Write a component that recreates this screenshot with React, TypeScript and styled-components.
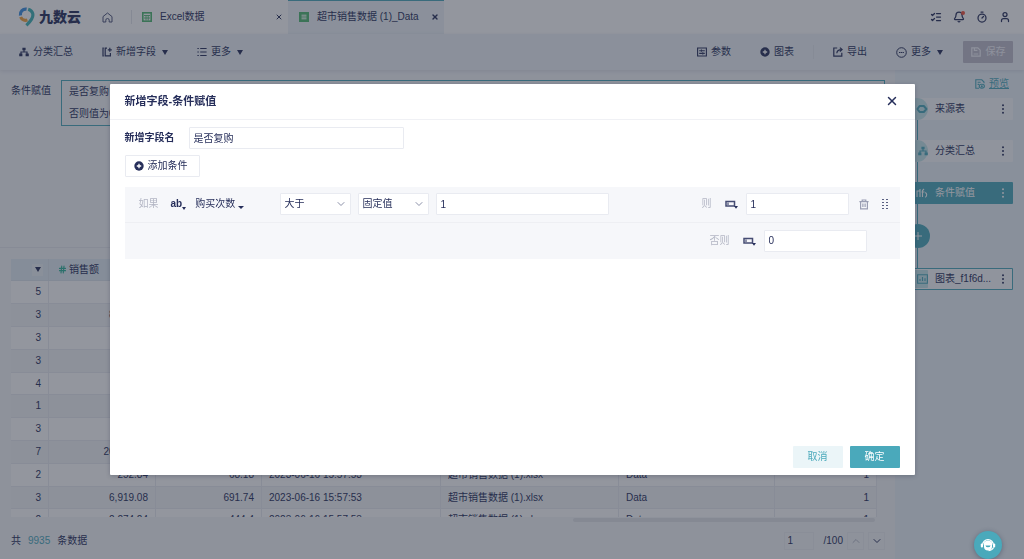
import React from "react";
import styled, { createGlobalStyle, css } from "styled-components";
import { Bell, Timer, User, X, ListChecks, ChevronDown, ChevronUp, Hash } from "lucide-react";

const INK = "#262e5a";
const TEAL = "#4aa9bb";
const LINE = "#e9ebf1";

const GlobalStyle = createGlobalStyle`
  *, *::before, *::after { box-sizing: border-box; }
  body { margin: 0; }
  body, button, input, select, table {
    font-family: "Liberation Sans", "Noto Sans CJK SC", sans-serif;
    font-size: 10px;
    line-height: 14px;
    color: ${INK};
  }
  button, input, select { margin: 0; padding: 0; border: 0; background: none; border-radius: 0; outline: none; }
  svg { display: block; flex: none; }
`;

/* ---------- page shell ---------- */

const Page = styled.div`
  display: flex;
  flex-direction: column;
  height: 100vh;
  overflow: hidden;
  background: #f4f6f9;
`;

const Header = styled.header`
  display: flex;
  flex: none;
  height: 34px;
  background: #fff;
`;

const Logo = styled.a`
  display: flex;
  align-items: center;
  gap: 4px;
  padding-left: 18px;
  width: 83px;
  color: ${INK};
  text-decoration: none;
  font-size: 14px;
  font-weight: 900;
  white-space: nowrap;
`;

const HomeLink = styled.a`
  display: flex;
  align-items: center;
  justify-content: center;
  width: 48px;
  color: #4a5178;
`;

const Tab = styled.div<{ $active?: boolean }>`
  display: flex;
  align-items: center;
  gap: 8px;
  width: ${(p) => (p.$active ? 156 : 157)}px;
  padding: 0 5px 0 11px;
  ${(p) =>
    p.$active
      ? css`
          background: #eef3f8;
          box-shadow: inset 0 1px ${TEAL};
        `
      : css`
          background: linear-gradient(#e2e4ea, #e2e4ea) 0 50% / 1px 14px no-repeat;
        `}
`;

const TabName = styled.span`
  flex: 1;
  white-space: nowrap;
`;

const IconButton = styled.button`
  display: inline-flex;
  align-items: center;
  justify-content: center;
  color: ${INK};
  cursor: pointer;
`;

const HeaderTools = styled.div`
  display: flex;
  align-items: center;
  gap: 11px;
  margin-left: auto;
  padding-right: 13px;
`;

const BellWrap = styled.span`
  position: relative;
  &::after {
    content: "";
    position: absolute;
    top: 0;
    right: 0;
    width: 4px;
    height: 4px;
    border-radius: 50%;
    background: #f0503c;
  }
`;

const Toolbar = styled.nav`
  display: flex;
  flex: none;
  align-items: center;
  height: 36px;
  padding: 0 11px 0 19px;
  background: #eef3f8;
  box-shadow: 0 1px 4px rgba(30, 36, 70, 0.12);
  z-index: 1;
`;

const ToolGroup = styled.div<{ $end?: boolean }>`
  display: flex;
  align-items: center;
  gap: 29px;
  margin-left: ${(p) => (p.$end ? "auto" : "0")};
`;

const ToolButton = styled.button`
  display: flex;
  align-items: center;
  gap: 4px;
  cursor: pointer;
  white-space: nowrap;
`;

const Caret = styled.span`
  margin-left: 2px;
  border: 3px solid transparent;
  border-top: 5px solid ${INK};
  border-bottom: 0;
`;

const ToolDivider = styled.span`
  width: 1px;
  height: 14px;
  margin: 0 19px;
  background: #e4e9ef;
`;

const SaveButton = styled.button`
  display: flex;
  align-items: center;
  justify-content: center;
  gap: 5px;
  width: 50px;
  height: 22px;
  margin-left: 20px;
  background: #bfbdcb;
  color: #f4f4fa;
  border-radius: 1px;
`;

const Body = styled.main`
  display: flex;
  flex: 1;
  min-height: 0;
`;

const Left = styled.section`
  display: flex;
  flex-direction: column;
  flex: 1;
  min-width: 0;
`;

/* ---------- formula and data table ---------- */

const FormulaPanel = styled.div`
  display: flex;
  flex: none;
  align-items: flex-start;
  gap: 10px;
  height: 178px;
  padding: 10px 10px 0 11px;
  border-bottom: 1px solid #e6e9ee;
`;

const FormulaLabel = styled.span`
  line-height: 22px;
  white-space: nowrap;
`;

const FormulaBox = styled.div`
  flex: 1;
  padding: 0 7px;
  border: 1px solid ${TEAL};
  line-height: 22px;
`;

const TableArea = styled.div`
  flex: 1;
  min-height: 0;
  margin: 11px 18px 0 11px;
  overflow: hidden;
`;

const DataTable = styled.table`
  width: 100%;
  table-layout: fixed;
  border-collapse: separate;
  border-spacing: 0;
`;

const HeadCell = styled.th`
  height: 22px;
  padding: 0 9px;
  background: #e3edf4;
  border-right: 1px solid #dde5ec;
  border-bottom: 1px solid #dde5ec;
  font-weight: 400;
  text-align: left;
`;

const HeadLabel = styled.span`
  display: flex;
  align-items: center;
  gap: 2px;
`;

const FilterButton = styled.button`
  display: flex;
  align-items: center;
  justify-content: center;
  width: 11px;
  height: 12px;
  margin-left: 12px;
  background: #edf2f7;
  ${Caret} {
    margin: 0;
  }
`;

const Row = styled.tr`
  height: 23px;
  background: #fff;
  &:nth-child(even) {
    background: #f2f4f7;
  }
  &:nth-child(5n) {
    height: 22px;
  }
`;

const Cell = styled.td<{ $num?: boolean }>`
  padding: 0 7px;
  border-right: 1px solid ${LINE};
  border-bottom: 1px solid ${LINE};
  text-align: ${(p) => (p.$num ? "right" : "left")};
  white-space: nowrap;
`;

const ScrollTrack = styled.div`
  display: flex;
  flex: none;
  justify-content: flex-end;
  margin: 1px 20px 0 11px;
`;

const ScrollThumb = styled.div`
  width: 35%;
  height: 4px;
  border-radius: 2px;
  background: #e2e4e9;
`;

const TableFooter = styled.footer`
  display: flex;
  flex: none;
  align-items: center;
  justify-content: space-between;
  height: 37px;
  padding: 0 10px 0 11px;
`;

const Total = styled.span`
  display: flex;
  gap: 7px;
  strong {
    font-weight: 400;
    color: ${TEAL};
  }
`;

const Pager = styled.div`
  display: flex;
  align-items: center;
  gap: 4px;
`;

const PageInput = styled.input`
  width: 30px;
  height: 18px;
  margin-right: 6px;
  padding: 0 3px;
  border: 1px solid #eceef2;
`;

const PageButton = styled.button<{ $off?: boolean }>`
  display: flex;
  align-items: center;
  justify-content: center;
  width: 17px;
  height: 18px;
  border: 1px solid #eceef2;
  color: ${(p) => (p.$off ? "#b4b8c6" : INK)};
`;

/* ---------- step flow ---------- */

const FlowPanel = styled.aside`
  display: flex;
  flex-direction: column;
  flex: none;
  width: 129px;
  padding: 7px 11px 0 11px;
  background: #ebf3f9;
`;

const PreviewLink = styled.a`
  display: flex;
  align-items: center;
  align-self: flex-end;
  gap: 4px;
  margin: 0 4px 7px 0;
  color: ${TEAL};
`;

const FlowCard = styled.div<{ $tone?: "active" | "outline" }>`
  display: flex;
  align-items: center;
  gap: 7px;
  height: 22px;
  padding-right: 9px;
  background: ${(p) => (p.$tone === "active" ? TEAL : "#f8fafc")};
  color: ${(p) => (p.$tone === "active" ? "#fff" : INK)};
  box-shadow: ${(p) => (p.$tone === "outline" ? `inset 0 0 0 1px ${TEAL}` : "none")};
  border-radius: 1px;
  svg:last-child {
    margin-left: auto;
  }
`;

const FlowIcon = styled.span<{ $plain?: boolean }>`
  display: flex;
  align-items: center;
  justify-content: center;
  flex: none;
  width: 22px;
  height: 22px;
  border-radius: 50%;
  background: ${(p) => (p.$plain ? "transparent" : "#c4e6ea")};
  color: ${(p) => (p.$plain ? "#fff" : TEAL)};
`;

const ChartIcon = styled(FlowIcon)`
  height: 18px;
  border-radius: 1px;
`;

const Connector = styled.span`
  flex: none;
  width: 1px;
  height: 20px;
  margin-left: 11px;
  background: ${TEAL};
`;

const AddStep = styled.button`
  display: flex;
  align-items: center;
  justify-content: center;
  flex: none;
  width: 24px;
  height: 24px;
  border-radius: 50%;
  background: ${TEAL};
  color: #fff;
`;

/* ---------- dialog ---------- */

const Overlay = styled.div`
  position: fixed;
  inset: 0;
  z-index: 10;
  display: flex;
  align-items: center;
  justify-content: center;
  background: rgba(40, 46, 62, 0.5);
`;

const Dialog = styled.section`
  display: flex;
  flex-direction: column;
  width: calc(100% - 219px);
  height: 70%;
  background: #fff;
  border-radius: 1px;
  box-shadow: 0 1px 4px rgba(20, 26, 50, 0.25);
`;

const DialogHeader = styled.header`
  display: flex;
  flex: none;
  align-items: center;
  justify-content: space-between;
  height: 36px;
  padding: 0 16px 0 15px;
  border-bottom: 1px solid #f0f1f5;
`;

const DialogTitle = styled.h2`
  margin: 0;
  font-size: 11px;
  line-height: 16px;
  font-weight: 700;
`;

const DialogBody = styled.div`
  display: flex;
  flex-direction: column;
  align-items: flex-start;
  flex: 1;
  padding: 7px 15px 0;
`;

const NameRow = styled.div`
  display: flex;
  align-items: center;
  gap: 14px;
  margin-bottom: 6px;
  label {
    font-weight: 700;
  }
`;

const TextInput = styled.input<{ $w: number }>`
  width: ${(p) => p.$w}px;
  height: 22px;
  padding: 0 4px;
  border: 1px solid ${LINE};
  border-radius: 1px;
  background: #fff;
`;

const AddCondition = styled.button`
  display: flex;
  align-items: center;
  gap: 4px;
  height: 22px;
  padding: 0 11px 0 8px;
  margin-bottom: 10px;
  border: 1px solid ${LINE};
  border-radius: 1px;
`;

const Conditions = styled.div`
  align-self: stretch;
  background: #f6f7fa;
`;

const ConditionRow = styled.div<{ $last?: boolean }>`
  display: flex;
  align-items: center;
  height: 36px;
  padding: 0 ${(p) => (p.$last ? 33 : 12)}px 0 14px;
  border-bottom: ${(p) => (p.$last ? "0" : "1px solid #eeeff3")};
`;

const Hint = styled.span`
  color: #b3b6c4;
`;

const FieldPicker = styled.button`
  display: flex;
  align-items: center;
  gap: 9px;
  width: 109px;
  margin-left: 12px;
  white-space: nowrap;
`;

const TypeMark = styled.span`
  display: flex;
  align-items: flex-end;
  font-weight: 700;
`;

const SmallCaret = styled.span`
  margin-bottom: 2px;
  border: 3px solid transparent;
  border-top: 3px solid ${INK};
  border-bottom: 0;
`;

const MiniCaret = styled.span`
  margin-bottom: 1px;
  border: 2px solid transparent;
  border-top: 3px solid ${INK};
  border-bottom: 0;
`;

const FieldName = styled.span`
  display: flex;
  align-items: flex-end;
  gap: 3px;
`;

const SelectWrap = styled.span`
  display: grid;
  align-items: center;
  width: 71px;
  margin-right: 7px;
  > * {
    grid-area: 1 / 1;
  }
  svg {
    justify-self: end;
    margin-right: 4px;
    color: #8b90a8;
    pointer-events: none;
  }
`;

const Select = styled.select`
  appearance: none;
  width: 100%;
  height: 22px;
  padding: 0 4px;
  border: 1px solid ${LINE};
  border-radius: 1px;
  background: #fff;
`;

const Result = styled.div`
  display: flex;
  align-items: center;
  gap: 8px;
  margin-left: auto;
  ${Hint} {
    margin-right: 5px;
  }
`;

const RowActions = styled.div`
  display: flex;
  align-items: center;
  gap: 13px;
  margin-left: 10px;
`;

const DialogFooter = styled.footer`
  display: flex;
  flex: none;
  justify-content: flex-end;
  gap: 7px;
  padding: 0 15px 7px;
`;

const Button = styled.button<{ $primary?: boolean }>`
  width: 50px;
  height: 22px;
  border-radius: 1px;
  background: ${(p) => (p.$primary ? TEAL : "#ebf5f8")};
  color: ${(p) => (p.$primary ? "#fff" : TEAL)};
`;

const ChatButton = styled.button`
  position: fixed;
  right: 22px;
  bottom: 0;
  z-index: 20;
  display: flex;
  align-items: center;
  justify-content: center;
  width: 28px;
  height: 28px;
  border-radius: 50%;
  background: ${TEAL};
  box-shadow: 0 1px 5px rgba(20, 30, 60, 0.35);
`;

/* ---------- icons ---------- */

const LogoMark = () => (
  <svg width="17" height="20" viewBox="0 0 17 20" fill="none" strokeWidth="3.2">
    <path d="M2.4 8.400A5.400 5.400 0 0 1 8.600 2.200" stroke="#3b8fe0" />
    <path d="M2.600 10A5.400 5.400 0 0 0 9.400 13" stroke="#f2a23a" />
    <path d="M10.200 2.200C15.400 3.600 15.800 8.600 13.600 12.200C12.200 14.500 10.600 16.400 8.400 18.400" stroke="#3eb3b5" />
  </svg>
);

const HomeIcon = () => (
  <svg width="11" height="11" viewBox="0 0 11 11" fill="none" stroke="currentColor">
    <path d="M5.500 1L1 4.600V10h2.800V8.200a1.700 1.700 0 0 1 3.400 0V10H10V4.600z" strokeLinejoin="round" />
  </svg>
);

const SheetIcon = ({ lines }: { lines?: boolean }) => (
  <svg width="10" height="10" viewBox="0 0 10 10" fill="none" stroke="#4fb870">
    <rect x="0.8" y="0.8" width="8.4" height="8.4" strokeWidth="1.6" fill={lines ? "#4fb870" : "#fff"} />
    <path
      d={lines ? "M2.5 3.2h5M2.5 5h5M2.5 6.800h5" : "M2 3.500h6M2 6h6M4 3.500v5M6.200 3.500v5"}
      stroke={lines ? "#fff" : "#4fb870"}
      strokeWidth={lines ? 1 : 0.9}
    />
  </svg>
);

const GroupIcon = () => (
  <svg width="10" height="10" viewBox="0 0 10 10" fill="none" stroke="currentColor">
    <path d="M3.400 .8h3.200v2.400H3.400zM.2 6.600h3.200v2.600H.2zM6.600 6.600h3.200v2.600H6.600z" fill="currentColor" stroke="none" />
    <path d="M5 3v2M2 7V5h6v2" strokeWidth="1.200" />
  </svg>
);

const AddFieldIcon = () => (
  <svg width="10" height="10" viewBox="0 0 10 10" fill="none" stroke="currentColor" strokeWidth="1.200">
    <path d="M5 1.200H3.200v7.600h5.200V6M1 .6v8.800M.4 1.200h1.400M.4 8.800h1.400M5.800 2.800h4M7.800 .8v4" />
  </svg>
);

const ListIcon = () => (
  <svg width="10" height="10" viewBox="0 0 10 10" stroke="currentColor" strokeWidth="1.200">
    <path d="M.4 1.500h1.400M3.200 1.500h6.400M.4 5h1.400M3.200 5h6.400M.4 8.500h1.400M3.200 8.500h6.400" />
  </svg>
);

const ParamIcon = () => (
  <svg width="10" height="10" viewBox="0 0 10 10" fill="none" stroke="currentColor" strokeWidth="1.100">
    <path d="M.6 1h8.800v8H.6zM2.200 3.700h1.600M5 3.700h2.800M4.400 2.600v2.200M2.200 6.400h3M6.400 6.400h1.400M5.800 5.300v2.200" />
  </svg>
);

const PlusDisc = () => (
  <svg width="10" height="10" viewBox="0 0 10 10">
    <circle cx="5" cy="5" r="4.700" fill={INK} />
    <path d="M2.800 5h4.400M5 2.800v4.400" stroke="#fff" strokeWidth="1.300" />
  </svg>
);

const ExportIcon = () => (
  <svg width="10" height="10" viewBox="0 0 10 10" fill="none" stroke="currentColor" strokeWidth="1.200">
    <path d="M4.200 1H.8v8.200h8V5.800M3.800 6.200C4 3.800 5.600 2.600 8.800 2.600M6.900.6l2.200 2-2.200 2" />
  </svg>
);

const MoreIcon = () => (
  <svg width="11" height="11" viewBox="0 0 11 11" fill="none" stroke="currentColor">
    <circle cx="5.500" cy="5.500" r="4.800" />
    <path d="M3 5.500h5" strokeWidth="1.200" strokeDasharray="1.300 .5" />
  </svg>
);

const SaveIcon = () => (
  <svg width="10" height="10" viewBox="0 0 10 10" fill="none" stroke="currentColor" strokeWidth="1.200">
    <path d="M.8.8h6L9.200 3.200v6H.8zM3.400 .8v2.600h3M2.600 7h4.600" />
  </svg>
);

const PreviewIcon = () => (
  <svg width="10" height="10" viewBox="0 0 10 10" fill="none" stroke="currentColor" strokeWidth="1.100">
    <path d="M4 9.200H.8V.8h6L9 3v1.200M2.600 3.200h3M2.600 5.400h1.400" />
    <ellipse cx="6.800" cy="7.200" rx="2.600" ry="1.900" />
    <circle cx="6.800" cy="7.200" r=".5" />
  </svg>
);

const SourceIcon = () => (
  <svg width="12" height="12" viewBox="0 0 12 12" fill="none" stroke="currentColor" strokeWidth="2">
    <path d="M3.600 3h4.200L10.400 6 7.800 9H3.600L1.400 6z" strokeLinejoin="round" />
  </svg>
);

const AssignIcon = () => (
  <svg width="12" height="12" viewBox="0 0 12 12" fill="none" stroke="currentColor" strokeWidth="1.100">
    <path d="M1 10V4h3M4 2v8M6.500 10V3.500L8 2M5.500 5h3M9.200 5.600c2 .8 2 3.600 0 4.800" />
  </svg>
);

const PictureIcon = () => (
  <svg width="11" height="10" viewBox="0 0 11 10" fill="none" stroke="currentColor" strokeWidth="1.100">
    <path d="M.6.8h9.800v8.400H.6zM3 7V5M5.500 7V3M8 7V4.200" />
  </svg>
);

const DotsIcon = () => (
  <svg width="2" height="10" viewBox="0 0 2 10" fill="currentColor">
    <circle cx="1" cy="1.200" r="1" />
    <circle cx="1" cy="5" r="1" />
    <circle cx="1" cy="8.800" r="1" />
  </svg>
);

const TrashIcon = () => (
  <svg width="10" height="11" viewBox="0 0 10 11" fill="none" stroke="#9a9eb3" strokeWidth="1.200">
    <path d="M.4 2.600h9.200M3.200 2.400V1h3.600v1.400M1.600 2.800v7h6.800v-7M3.900 4.600v3.400M6.100 4.600v3.400" />
  </svg>
);

const GripIcon = () => (
  <svg width="6" height="10" viewBox="0 0 6 10" fill={INK} opacity=".75">
    {[0, 3, 6, 9].map((y) => (
      <path key={y} d={`M0 ${y}h2v1H0zM4 ${y}h2v1H4z`} />
    ))}
  </svg>
);

const ConstantIcon = () => (
  <svg width="13" height="10" viewBox="0 0 13 10">
    <path d="M1 2.500h8.500v4.500H1z" fill="none" stroke={INK} strokeWidth="1.500" opacity=".85" />
    <path d="M3 3.500v2.500" stroke={INK} strokeWidth="1" />
    <path d="M9 7h4l-2 2.800z" fill={INK} />
  </svg>
);

const AgentIcon = () => (
  <svg width="16" height="16" viewBox="0 0 16 16">
    <path d="M2.600 8a5.400 5.400 0 0 1 10.800 0" fill="none" stroke="#fff" strokeWidth="1.300" />
    <rect x=".8" y="6.600" width="2.200" height="4" rx="1" fill="#fff" />
    <rect x="13" y="6.600" width="2.200" height="4" rx="1" fill="#fff" />
    <path d="M4 5.400a5 5 0 0 1 8 0v4A4 4 0 0 1 4 9.400z" fill="#fff" />
    <path d="M5.400 8.400h5.200a2.700 2.700 0 0 1-5.200 0z" fill={TEAL} />
    <path d="M13.600 10.400c-.8 2-2.400 3-5 3.200" fill="none" stroke="#fff" strokeWidth="1.200" />
  </svg>
);

/* ---------- data ---------- */

const FILE = "超市销售数据 (1).xlsx";
const TIME = "2023-06-16 15:57:53";

const rows: string[][] = [
  ["5", "", "", "", "", "", ""],
  ["3", "8,190.12", "", "", "", "", ""],
  ["3", "", "", "", "", "", ""],
  ["3", "", "", "", "", "", ""],
  ["4", "", "", "", "", "", ""],
  ["1", "", "", "", "", "", ""],
  ["3", "", "", "", "", "", ""],
  ["7", "20,148.32", "", "", "", "", ""],
  ["2", "252.84", "68.18", TIME, FILE, "Data", "1"],
  ["3", "6,919.08", "691.74", TIME, FILE, "Data", "1"],
  ["2", "2,274.24", "444.4", TIME, FILE, "Data", "1"],
];

const numeric = [true, true, true, false, false, false, true];

export default function App() {
  return (
    <>
      <GlobalStyle />
      <Page>
        <Header>
          <Logo href="#">
            <LogoMark />
            九数云
          </Logo>
          <HomeLink href="#" aria-label="首页">
            <HomeIcon />
          </HomeLink>
          <Tab>
            <SheetIcon />
            <TabName>Excel数据</TabName>
            <IconButton aria-label="关闭">
              <X size={8} strokeWidth={3} />
            </IconButton>
          </Tab>
          <Tab $active>
            <SheetIcon lines />
            <TabName>超市销售数据 (1)_Data</TabName>
            <IconButton aria-label="关闭">
              <X size={8} strokeWidth={4} />
            </IconButton>
          </Tab>
          <HeaderTools>
            <IconButton aria-label="任务">
              <ListChecks size={12} strokeWidth={2.5} />
            </IconButton>
            <IconButton aria-label="通知">
              <BellWrap>
                <Bell size={12} strokeWidth={2.5} />
              </BellWrap>
            </IconButton>
            <IconButton aria-label="历史">
              <Timer size={12} strokeWidth={2.5} />
            </IconButton>
            <IconButton aria-label="账户">
              <User size={12} strokeWidth={2.5} />
            </IconButton>
          </HeaderTools>
        </Header>

        <Toolbar>
          <ToolGroup>
            <ToolButton>
              <GroupIcon />
              分类汇总
            </ToolButton>
            <ToolButton>
              <AddFieldIcon />
              新增字段
              <Caret />
            </ToolButton>
            <ToolButton>
              <ListIcon />
              更多
              <Caret />
            </ToolButton>
          </ToolGroup>
          <ToolGroup $end>
            <ToolButton>
              <ParamIcon />
              参数
            </ToolButton>
            <ToolButton>
              <PlusDisc />
              图表
            </ToolButton>
          </ToolGroup>
          <ToolDivider />
          <ToolGroup>
            <ToolButton>
              <ExportIcon />
              导出
            </ToolButton>
            <ToolButton>
              <MoreIcon />
              更多
              <Caret />
            </ToolButton>
          </ToolGroup>
          <SaveButton>
            <SaveIcon />
            保存
          </SaveButton>
        </Toolbar>

        <Body>
          <Left>
            <FormulaPanel>
              <FormulaLabel>条件赋值</FormulaLabel>
              <FormulaBox>
                是否复购
                <br />
                否则值为0
              </FormulaBox>
            </FormulaPanel>
            <TableArea>
              <DataTable>
                <colgroup>
                  <col style={{ width: 38 }} />
                  <col style={{ width: 107 }} />
                  <col style={{ width: 106 }} />
                  <col style={{ width: 179 }} />
                  <col style={{ width: 178 }} />
                  <col style={{ width: 156 }} />
                  <col />
                </colgroup>
                <thead>
                  <tr>
                    <HeadCell>
                      <FilterButton aria-label="筛选">
                        <Caret />
                      </FilterButton>
                    </HeadCell>
                    <HeadCell>
                      <HeadLabel>
                        <Hash size={9} strokeWidth={3} color="#2fb39a" />
                        销售额
                      </HeadLabel>
                    </HeadCell>
                    <HeadCell />
                    <HeadCell />
                    <HeadCell />
                    <HeadCell />
                    <HeadCell />
                  </tr>
                </thead>
                <tbody>
                  {rows.map((row, r) => (
                    <Row key={r}>
                      {row.map((value, c) => (
                        <Cell key={c} $num={numeric[c]}>
                          {value}
                        </Cell>
                      ))}
                    </Row>
                  ))}
                </tbody>
              </DataTable>
            </TableArea>
            <ScrollTrack>
              <ScrollThumb />
            </ScrollTrack>
            <TableFooter>
              <Total>
                共 <strong>9935</strong> 条数据
              </Total>
              <Pager>
                <PageInput aria-label="页码" defaultValue="1" />
                /100
                <PageButton $off aria-label="上一页">
                  <ChevronUp size={12} />
                </PageButton>
                <PageButton aria-label="下一页">
                  <ChevronDown size={12} />
                </PageButton>
              </Pager>
            </TableFooter>
          </Left>

          <FlowPanel>
            <PreviewLink href="#">
              <PreviewIcon />
              预览
            </PreviewLink>
            <FlowCard>
              <FlowIcon>
                <SourceIcon />
              </FlowIcon>
              来源表
              <DotsIcon />
            </FlowCard>
            <Connector />
            <FlowCard>
              <FlowIcon>
                <GroupIcon />
              </FlowIcon>
              分类汇总
              <DotsIcon />
            </FlowCard>
            <Connector />
            <FlowCard $tone="active">
              <FlowIcon $plain>
                <AssignIcon />
              </FlowIcon>
              条件赋值
              <DotsIcon />
            </FlowCard>
            <Connector />
            <AddStep aria-label="添加步骤">
              <svg width="8" height="8" viewBox="0 0 8 8" stroke="currentColor">
                <path d="M0 4h8M4 0v8" />
              </svg>
            </AddStep>
            <Connector />
            <FlowCard $tone="outline">
              <ChartIcon>
                <PictureIcon />
              </ChartIcon>
              图表_f1f6d...
              <DotsIcon />
            </FlowCard>
          </FlowPanel>
        </Body>
      </Page>

      <Overlay>
        <Dialog role="dialog" aria-labelledby="dialog-title">
          <DialogHeader>
            <DialogTitle id="dialog-title">新增字段-条件赋值</DialogTitle>
            <IconButton aria-label="关闭">
              <X size={14} strokeWidth={2.5} />
            </IconButton>
          </DialogHeader>
          <DialogBody>
            <NameRow>
              <label htmlFor="field-name">新增字段名</label>
              <TextInput id="field-name" $w={215} defaultValue="是否复购" />
            </NameRow>
            <AddCondition>
              <PlusDisc />
              添加条件
            </AddCondition>
            <Conditions>
              <ConditionRow>
                <Hint>如果</Hint>
                <FieldPicker>
                  <TypeMark>
                    ab
                    <MiniCaret />
                  </TypeMark>
                  <FieldName>
                    购买次数
                    <SmallCaret />
                  </FieldName>
                </FieldPicker>
                <SelectWrap>
                  <Select aria-label="比较方式" defaultValue="大于">
                    <option>大于</option>
                  </Select>
                  <ChevronDown size={12} />
                </SelectWrap>
                <SelectWrap>
                  <Select aria-label="值类型" defaultValue="固定值">
                    <option>固定值</option>
                  </Select>
                  <ChevronDown size={12} />
                </SelectWrap>
                <TextInput $w={173} aria-label="比较值" defaultValue="1" />
                <Result>
                  <Hint as="label" htmlFor="then-value">
                    则
                  </Hint>
                  <IconButton aria-label="结果类型">
                    <ConstantIcon />
                  </IconButton>
                  <TextInput id="then-value" $w={103} defaultValue="1" />
                </Result>
                <RowActions>
                  <IconButton aria-label="删除">
                    <TrashIcon />
                  </IconButton>
                  <IconButton aria-label="拖动">
                    <GripIcon />
                  </IconButton>
                </RowActions>
              </ConditionRow>
              <ConditionRow $last>
                <Result>
                  <Hint as="label" htmlFor="else-value">
                    否则
                  </Hint>
                  <IconButton aria-label="结果类型">
                    <ConstantIcon />
                  </IconButton>
                  <TextInput id="else-value" $w={103} defaultValue="0" />
                </Result>
              </ConditionRow>
            </Conditions>
          </DialogBody>
          <DialogFooter>
            <Button>取消</Button>
            <Button $primary>确定</Button>
          </DialogFooter>
        </Dialog>
      </Overlay>

      <ChatButton aria-label="在线客服">
        <AgentIcon />
      </ChatButton>
    </>
  );
}
